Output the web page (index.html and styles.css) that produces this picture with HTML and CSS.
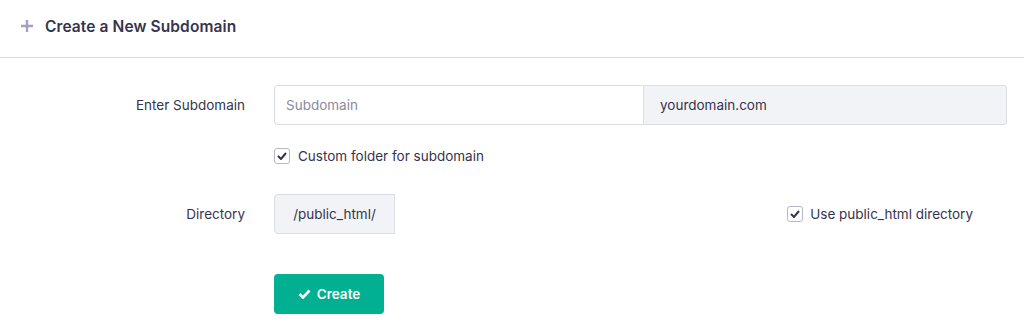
FILE: index.html
```html
<!DOCTYPE html>
<html>
<head>
<meta charset="utf-8">
<link rel="stylesheet" href="styles.css">
</head>
<body>
<div class="card">
  <div class="card-header">
    <svg class="plus" width="14" height="14" viewBox="0 0 14 14"><path d="M7 1v12M1 7h12" stroke="#a3a1bd" stroke-width="2.4" stroke-linecap="butt"/></svg>
    <h2 class="title">Create a New Subdomain</h2>
  </div>
  <div class="card-body">
    <div class="row">
      <label class="label">Enter Subdomain</label>
      <div class="control">
        <div class="input-group">
          <input class="input" type="text" placeholder="Subdomain">
          <div class="addon">yourdomain.com</div>
        </div>
      </div>
    </div>
    <div class="row check-row">
      <div class="label"></div>
      <div class="control">
        <label class="check"><span class="box"><svg width="10" height="8" viewBox="0 0 10 8"><path d="M1 4l3 3 5-6" fill="none" stroke="#36344d" stroke-width="2"/></svg></span>Custom folder for subdomain</label>
      </div>
    </div>
    <div class="row dir-row">
      <label class="label">Directory</label>
      <div class="control dir-control">
        <div class="dir-box">/public_html/</div>
        <label class="check"><span class="box"><svg width="10" height="8" viewBox="0 0 10 8"><path d="M1 4l3 3 5-6" fill="none" stroke="#36344d" stroke-width="2"/></svg></span>Use public_html directory</label>
      </div>
    </div>
    <div class="row btn-row">
      <div class="label"></div>
      <div class="control">
        <button class="btn"><svg width="13" height="10" viewBox="0 0 13 10"><path d="M1.5 5l3.5 3.5 6.5-7" fill="none" stroke="#fff" stroke-width="2.6"/></svg>Create</button>
      </div>
    </div>
  </div>
</div>
</body>
</html>
```
FILE: styles.css
```css
* { box-sizing: border-box; }
body {
  margin: 0;
  background: #fff;
  font-family: Inter, "DejaVu Sans", sans-serif;
  color: #36344d;
}
.card-header {
  height: 58px;
  display: flex;
  align-items: center;
  padding-left: 20px;
  padding-bottom: 5px;
  border-bottom: 1px solid #dcdce4;
}
.plus { margin-right: 11px; }
.title {
  margin: 0;
  font-size: 15.5px;
  font-weight: 600;
  color: #36344d;
  letter-spacing: 0.1px;
}
.card-body { padding: 27px 17px 0 0; }
.row { display: flex; align-items: center; }
.label {
  width: 274px;
  padding-right: 29px;
  text-align: right;
  font-size: 13.5px;
  color: #36344d;
  flex-shrink: 0;
}
.control { flex: 1; }
.input-group { display: flex; height: 40px; }
.input {
  flex: 1;
  min-width: 0;
  border: 1px solid #dcdce4;
  border-radius: 4px 0 0 4px;
  padding: 0 11px;
  font: inherit;
  font-size: 13.5px;
  color: #36344d;
  outline: none;
}
.input::placeholder { color: #8c8b9b; }
.addon {
  flex: 1;
  background: #f2f3f6;
  border: 1px solid #dcdce4;
  border-left: none;
  border-radius: 0 4px 4px 0;
  display: flex;
  align-items: center;
  padding-left: 16px;
  font-size: 13.5px;
}
.check-row { margin-top: 19px; }
.check {
  display: inline-flex;
  align-items: center;
  font-size: 13.5px;
  color: #36344d;
}
.box {
  width: 16px;
  height: 16px;
  border: 1px solid #b9b7cc;
  border-radius: 3px;
  display: inline-flex;
  align-items: center;
  justify-content: center;
  margin-right: 8px;
}
.dir-control .box { margin-right: 7px; }
.dir-row { margin-top: 30px; }
.dir-control {
  display: flex;
  align-items: center;
  justify-content: space-between;
  padding-right: 34px;
}
.dir-box {
  width: 121px;
  height: 40px;
  background: #f2f3f6;
  border: 1px solid #dcdce4;
  border-radius: 4px 0 0 4px;
  display: flex;
  align-items: center;
  justify-content: center;
  font-size: 13.5px;
}
.btn-row { margin-top: 40px; }
.btn {
  width: 110px;
  height: 40px;
  background: #00b090;
  border: none;
  border-radius: 4px;
  color: #fff;
  font: inherit;
  font-size: 13.5px;
  font-weight: 600;
  display: inline-flex;
  align-items: center;
  justify-content: center;
  gap: 6px;
  padding: 0;
}
```
